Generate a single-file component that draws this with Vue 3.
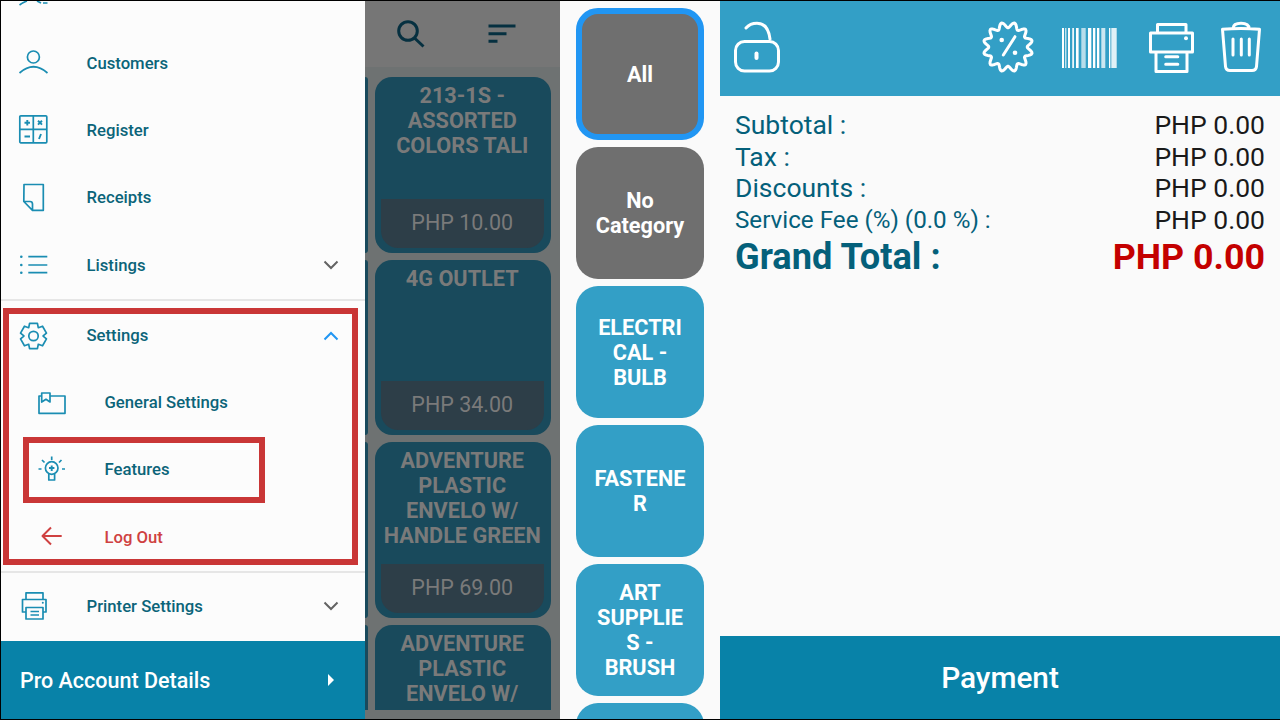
<template>
  <div class="screen">
    <!-- side drawer -->
    <aside class="drawer">
      <div class="menu">
        <div class="row row-clipped">
          <svg class="ico" width="32" height="32" viewBox="0 0 32 32"><path d="M1.500 25Q7 21.500 9 21M19 21L23 23M25 23H29.500" /></svg>
          <span>Users</span>
        </div>
        <div class="row">
          <svg class="ico" width="32" height="32" viewBox="0 0 32 32"><circle cx="15.400" cy="10" r="6" /><path d="M1.500 26Q15.500 13.500 29.500 26" /></svg>
          <span>Customers</span>
        </div>
        <div class="row">
          <svg class="ico" width="32" height="32" viewBox="0 0 32 32">
            <rect x="1.800" y="1.800" width="27" height="27" rx="1" /><path d="M15.300 2V29M2 15.300H29" />
            <path class="thick" d="M6.500 8.700H12M9.300 6V11.400M20 6.800L24 10.600M24 6.800L20 10.600M6.500 22.500H12M21 25L23 20" />
          </svg>
          <span>Register</span>
        </div>
        <div class="row">
          <svg class="ico" width="32" height="32" viewBox="0 0 32 32"><path d="M6 2.500H25.300V28.300H14.500L5.800 19.500ZM5.800 19.500H12Q14.500 19.500 14.500 22V28.300" /></svg>
          <span>Receipts</span>
        </div>
        <div class="row">
          <svg class="ico" width="32" height="32" viewBox="0 0 32 32">
            <path d="M10.300 7.700H29.300M10.300 16H29.300M10.300 23.700H29.300" />
            <circle class="dot" cx="3.300" cy="7.700" r="1.300" /><circle class="dot" cx="3.300" cy="16" r="1.300" /><circle class="dot" cx="3.300" cy="23.700" r="1.300" />
          </svg>
          <span>Listings</span>
          <svg class="chev" width="16" height="10" viewBox="0 0 16 10"><path d="M1.500 1.500L8 8L14.500 1.500" /></svg>
        </div>
        <div class="rule rule-top"></div>
        <div class="row tight">
          <svg class="ico" width="32" height="32" viewBox="0 0 32 32"><path :d="gearPath" /><circle cx="15.500" cy="16" r="4.700" /></svg>
          <span>Settings</span>
          <svg class="chev chev-open" width="16" height="10" viewBox="0 0 16 10"><path d="M1.500 8.500L8 2L14.500 8.500" /></svg>
        </div>
        <div class="row tight sub">
          <svg class="ico" width="32" height="32" viewBox="0 0 32 32"><path d="M5.700 9H3V26.300H29V9H14.500M5.700 9V6H14V15L10 12.300L5.700 15Z" /></svg>
          <span>General Settings</span>
        </div>
        <div class="row tight sub">
          <svg class="ico" width="32" height="32" viewBox="0 0 32 32">
            <circle cx="15.700" cy="14" r="6.300" /><path d="M12.800 19.500V26H18.600V19.500M15.700 2.500V6M6 6L8.500 8.500M25.500 6L23 8.500M2.500 15H5.500M26 15H29" />
            <path class="thick" d="M13 14H18.400M15.700 11.500V17" />
          </svg>
          <span>Features</span>
        </div>
        <div class="row tight sub logout">
          <svg class="ico" width="32" height="32" viewBox="0 0 32 32"><path d="M25.700 15H7M15 6.500L6.500 15L15 23.500" /></svg>
          <span>Log Out</span>
        </div>
        <div class="rule"></div>
        <div class="row">
          <svg class="ico" width="32" height="32" viewBox="0 0 32 32">
            <path d="M8 9V2.800H25V9M8 22H4.500V9.500H28V22H25M8 17.500H25V29H8ZM12.500 21.500H21M12.500 25H21" />
            <circle class="dot" cx="24.800" cy="12.800" r="1" />
          </svg>
          <span>Printer Settings</span>
          <svg class="chev" width="16" height="10" viewBox="0 0 16 10"><path d="M1.500 1.500L8 8L14.500 1.500" /></svg>
        </div>
      </div>
      <div class="pro">
        <span>Pro Account Details</span>
        <i class="caret"></i>
      </div>
    </aside>

    <!-- products, dimmed behind the drawer -->
    <section class="products">
      <div class="products-head">
        <svg width="32" height="32" viewBox="0 0 32 32"><circle cx="12" cy="13" r="9.300" /><path d="M18.500 20L27.500 28.500" /></svg>
        <svg width="32" height="32" viewBox="0 0 32 32"><path d="M2.500 8H29.500M2.500 15.700H20.500M2.500 23.300H11.500" /></svg>
      </div>
      <div class="products-body">
        <div class="edge-col">
          <div v-for="(p, i) in products" :key="i" class="edge"></div>
        </div>
        <div class="product-col">
          <div v-for="(p, i) in products" :key="i" class="product">
            <div class="product-name">{{ p.name }}</div>
            <div class="product-price">{{ p.price }}</div>
          </div>
        </div>
      </div>
    </section>

    <!-- categories -->
    <section class="categories">
      <div v-for="(c, i) in categories" :key="i" class="cat" :class="c.kind">{{ c.name }}</div>
    </section>

    <!-- ticket -->
    <section class="ticket">
      <header class="ticket-head">
        <svg width="48" height="56" viewBox="0 0 48 56"><rect x="3.500" y="21.500" width="43" height="29.500" rx="9" /><path d="M14 8Q18 3.200 25 3.200Q36 3.200 38 19" /><path class="key" d="M24.500 33.500V38" /></svg>
        <div class="tools">
          <svg width="56" height="56" viewBox="0 0 56 56"><path :d="badgePath" /><path d="M35 16.700L23.300 35" /><circle class="fill" cx="21.700" cy="20" r="2.300" /><circle class="fill" cx="35" cy="32.700" r="2.300" /></svg>
          <svg class="barcode" width="55" height="40" viewBox="0 0 55 40"><rect v-for="(b, i) in bars" :key="i" :x="b[0]" y="0" :width="b[1]" height="40" :opacity="b[2] || 1" /></svg>
          <svg class="t-print" width="48" height="56" viewBox="0 0 48 56"><path d="M9.500 13V4.500H38V13M8 32H2.500V13H44.500V32H39M8 32H39V51.500H8ZM17.700 36.700H29.800M17.700 44.300H29.800" /><circle class="fill" cx="38" cy="18.300" r="2" /></svg>
          <svg class="t-trash" width="44" height="56" viewBox="0 0 44 56"><path d="M3.500 9.300Q22 7.500 40.500 9.300L37.500 46.500Q37 50.500 33 50.500H11Q7 50.500 6.500 46.500ZM14 8.500Q14 3.200 22 3.200Q30 3.200 30 8.500M14 19V35M22.300 19V35M30.300 19V35" /></svg>
        </div>
      </header>
      <div class="totals">
        <div v-for="t in totals" :key="t.label" class="line">
          <span class="line-label" :class="{ small: t.small }">{{ t.label }}</span>
          <span class="line-value">{{ t.value }}</span>
        </div>
        <div class="line grand">
          <span class="line-label">Grand Total :</span>
          <span class="line-value">PHP 0.00</span>
        </div>
      </div>
      <div class="payment">Payment</div>
    </section>

    <!-- red annotation boxes on the screenshot -->
    <div class="mark mark-outer"></div>
    <div class="mark mark-inner"></div>
  </div>
</template>

<script setup>
const products = [
  { name: '213-1S - ASSORTED COLORS TALI', price: 'PHP 10.00' },
  { name: '4G OUTLET', price: 'PHP 34.00' },
  { name: 'ADVENTURE PLASTIC ENVELO W/ HANDLE GREEN', price: 'PHP 69.00' },
  { name: 'ADVENTURE PLASTIC ENVELO W/', price: '' },
]

const categories = [
  { name: 'All', kind: 'active' },
  { name: 'No Category', kind: 'plain' },
  { name: 'ELECTRICAL - BULB', kind: '' },
  { name: 'FASTENER', kind: '' },
  { name: 'ART SUPPLIES - BRUSH', kind: '' },
  { name: '', kind: '' },
]

const totals = [
  { label: 'Subtotal :', value: 'PHP 0.00' },
  { label: 'Tax :', value: 'PHP 0.00' },
  { label: 'Discounts :', value: 'PHP 0.00' },
  { label: 'Service Fee (%) (0.0 %) :', value: 'PHP 0.00', small: true },
]

// x, width and opacity of each barcode stripe
const bars = [
  [0, 2], [3.3, 1], [6, 2], [10.3, 1.6], [14, 2.6], [19.3, 4.4, 0.65], [26, 3.3], [31, 2.3],
  [35, 2.3], [39.3, 4, 0.75], [47, 1.4], [49.3, 5.4, 0.85],
]

const polar = (cx, cy, r, a) => `${(cx + r * Math.cos(a)).toFixed(2)} ${(cy + r * Math.sin(a)).toFixed(2)}`

// six tooth cog
const gearPoints = []
for (let i = 0; i < 6; i++) {
  const a = (i * Math.PI) / 3 - Math.PI / 2
  gearPoints.push(polar(15.5, 16, 9.6, a - 0.52), polar(15.5, 16, 13.3, a - 0.3), polar(15.5, 16, 13.3, a + 0.3), polar(15.5, 16, 9.6, a + 0.52))
}
const gearPath = 'M' + gearPoints.join('L') + 'Z'

// scalloped discount badge
const badgePoints = []
for (let i = 0; i < 144; i++) {
  const a = (i / 144) * Math.PI * 2
  badgePoints.push(polar(28, 27, 22 + 2.8 * Math.cos(12 * a + Math.PI), a))
}
const badgePath = 'M' + badgePoints.join('L') + 'Z'
</script>

<style scoped>
.screen {
  position: relative;
  display: flex;
  width: 1280px;
  height: 720px;
  box-sizing: border-box;
  overflow: hidden;
  border: solid #000;
  border-width: 1px 0 1px 1px;
  font-family: Roboto, "Liberation Sans", sans-serif;
  background: #fafafa;
}

.drawer {
  display: flex;
  flex-direction: column;
  flex: none;
  width: 364px;
  background: #fcfcfc;
}
.menu {
  flex: 1;
  min-height: 0;
  margin-top: -39px;
}
.row {
  display: flex;
  align-items: center;
  height: 67.4px;
  padding-left: 17px;
  padding-right: 26px;
  font-size: 16.7px;
  font-weight: 500;
  color: #0b6479;
}
.tight {
  height: 67.2px;
}
.row span {
  flex: 1;
  margin-left: 36.5px;
}
.sub {
  padding-left: 35px;
}
.ico {
  flex: none;
  fill: none;
  stroke: #1a8db2;
  stroke-width: 1.7;
  stroke-linejoin: round;
}
.ico .dot {
  fill: #1a8db2;
  stroke: none;
}
.ico .thick {
  stroke-width: 1.9;
}
.logout {
  color: #cf4141;
}
.logout .ico {
  stroke: #cf4141;
  stroke-width: 2;
}
.chev {
  flex: none;
  fill: none;
  stroke: #636363;
  stroke-width: 2;
}
.chev-open {
  stroke: #2196f3;
}
.rule {
  height: 2px;
  background: #e6e6e6;
}
.rule-top {
  margin-bottom: 1px;
}
.pro {
  display: flex;
  align-items: center;
  justify-content: space-between;
  flex: none;
  height: 78px;
  padding: 0 31px 0 19px;
  background: #0882a8;
  color: #fff;
  font-size: 21.5px;
  font-weight: 500;
}
.caret {
  border-left: 6px solid #fff;
  border-top: 6px solid transparent;
  border-bottom: 6px solid transparent;
}

.products {
  flex: none;
  width: 195px;
  display: flex;
  flex-direction: column;
  background: #6e7272;
}
.products-head {
  flex: none;
  height: 66px;
  display: flex;
  align-items: center;
  gap: 58px;
  padding-left: 31px;
  background: #767676;
}
.products-head svg {
  fill: none;
  stroke: #063040;
  stroke-width: 3;
}
.products-body {
  display: flex;
  gap: 7px;
  height: 633px;
  margin-top: 10px;
  overflow: hidden;
}
.edge-col,
.product-col {
  display: flex;
  flex-direction: column;
  gap: 7px;
}
.edge-col {
  width: 3px;
}
.edge {
  flex: none;
  height: 175.5px;
  background: #194a5c;
  border-radius: 0 3px 3px 0;
}
.product-col {
  width: 175.5px;
}
.product {
  flex: none;
  display: flex;
  flex-direction: column;
  height: 175.5px;
  box-sizing: border-box;
  padding: 6px 7px 5px 6px;
  border-radius: 17px;
  background: #194a5c;
  color: #7a7a7a;
  text-align: center;
}
.product-name {
  flex: 1;
  font-size: 21.7px;
  font-weight: 700;
  line-height: 25px;
}
.product-price {
  flex: none;
  height: 49px;
  line-height: 48px;
  font-size: 21.5px;
  background: #2d3e48;
  border-radius: 0 0 17px 17px;
}

.categories {
  flex: none;
  width: 160px;
  box-sizing: border-box;
  display: flex;
  flex-direction: column;
  gap: 7.5px;
  padding: 7px 16px 0;
  background: #fafafa;
  overflow: hidden;
}
.cat {
  flex: none;
  height: 131.5px;
  box-sizing: border-box;
  display: flex;
  align-items: center;
  justify-content: center;
  padding: 1px 16px 0;
  border-radius: 22px;
  background: #339fc6;
  color: #fff;
  font-size: 21.7px;
  font-weight: 700;
  line-height: 25px;
  text-align: center;
  overflow-wrap: anywhere;
}
.plain,
.active {
  background: #6f6f6f;
}
.active {
  border: 6px solid #2196f3;
}

.ticket {
  flex: 1;
  display: flex;
  flex-direction: column;
  min-width: 0;
  background: #fafafa;
}
.ticket-head {
  flex: none;
  height: 95px;
  box-sizing: border-box;
  display: flex;
  align-items: center;
  justify-content: space-between;
  padding: 0 17px 1px 12px;
  background: #339fc6;
}
.tools {
  display: flex;
  align-items: center;
  gap: 26px;
}
.ticket-head svg {
  display: block;
  fill: none;
  stroke: #fff;
  stroke-width: 3;
  stroke-linejoin: round;
  stroke-linecap: round;
}
.ticket-head .fill {
  fill: #fff;
  stroke: none;
}
.ticket-head .barcode {
  fill: #fff;
  stroke: none;
}
.ticket-head .t-print {
  margin-left: 5px;
}
.ticket-head .t-trash {
  margin-left: -3px;
}
.ticket-head .key {
  stroke-width: 4;
}
.totals {
  flex: 1;
  padding: 13px 15px 0;
}
.line {
  display: flex;
  align-items: center;
  justify-content: space-between;
  height: 31.6px;
  font-size: 26.5px;
}
.line-label {
  color: #04607a;
}
.line-label.small {
  font-size: 24.2px;
}
.line-value {
  color: #1a1a1a;
}
.grand {
  height: 43px;
  font-size: 36.2px;
  font-weight: 700;
}
.grand .line-value {
  color: #c40000;
  font-size: 35.8px;
}
.payment {
  flex: none;
  height: 83px;
  display: flex;
  align-items: center;
  justify-content: center;
  background: #0882a8;
  color: #fff;
  font-size: 29.8px;
  font-weight: 500;
}

.mark {
  position: absolute;
  box-sizing: border-box;
  border: 6px solid #c93636;
}
.mark-outer {
  left: 2px;
  top: 307px;
  width: 355px;
  height: 257px;
}
.mark-inner {
  left: 22px;
  top: 436px;
  width: 242px;
  height: 66px;
}
</style>
